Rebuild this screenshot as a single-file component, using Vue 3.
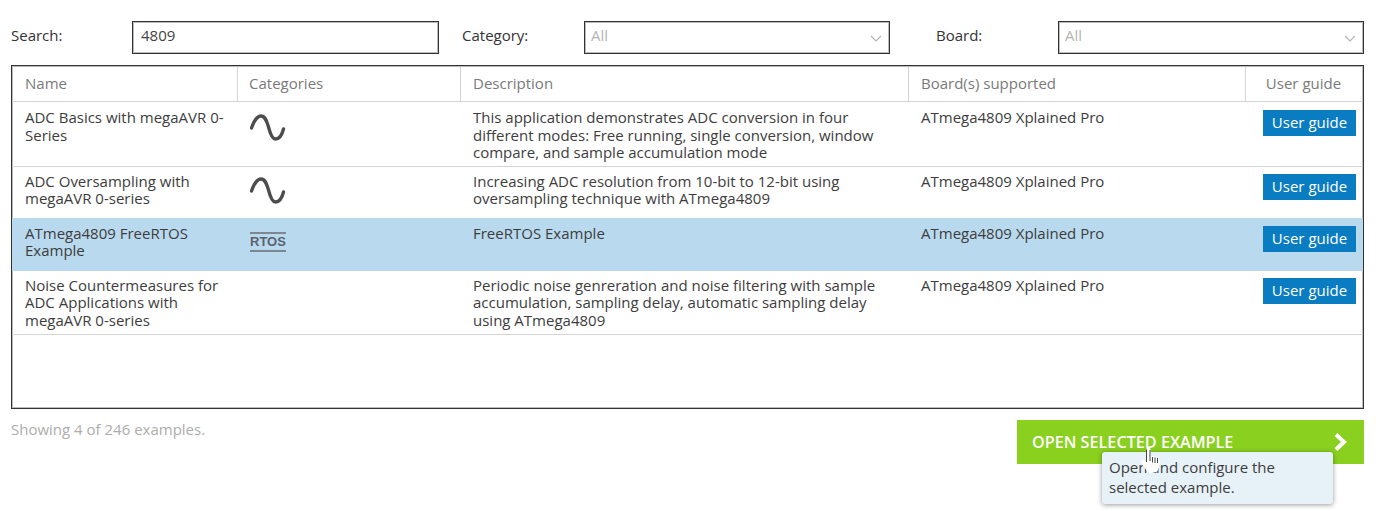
<script setup>
const rows = [
  { name: 'ADC Basics with megaAVR 0-Series', icon: 'wave', desc: 'This application demonstrates ADC conversion in four different modes: Free running, single conversion, window compare, and sample accumulation mode', h: 65 },
  { name: 'ADC Oversampling with megaAVR 0-series', icon: 'wave', desc: 'Increasing ADC resolution from 10-bit to 12-bit using oversampling technique with ATmega4809', h: 51 },
  { name: 'ATmega4809 FreeRTOS Example', icon: 'rtos', desc: 'FreeRTOS Example', h: 53, selected: true },
  { name: 'Noise Countermeasures for ADC Applications with megaAVR 0-series', icon: '', desc: 'Periodic noise genreration and noise filtering with sample accumulation, sampling delay, automatic sampling delay using ATmega4809', h: 64 },
]
</script>

<template>
  <div class="page">
    <div class="filters">
      <label class="lab">Search:</label>
      <div class="field">4809</div>
      <label class="lab">Category:</label>
      <div class="field sel">All
        <svg class="chev" width="12" height="7" viewBox="0 0 12 7"><path d="M1 1l5 5 5-5" fill="none" stroke="#b4b4b4" stroke-width="1.1"/></svg>
      </div>
      <label class="lab">Board:</label>
      <div class="field sel">All
        <svg class="chev" width="12" height="7" viewBox="0 0 12 7"><path d="M1 1l5 5 5-5" fill="none" stroke="#b4b4b4" stroke-width="1.1"/></svg>
      </div>
    </div>

    <div class="table">
      <div class="row head">
        <div class="c">Name</div>
        <div class="c">Categories</div>
        <div class="c">Description</div>
        <div class="c">Board(s) supported</div>
        <div class="c center">User guide</div>
      </div>
      <div v-for="r in rows" :key="r.name" class="row body" :class="{ selected: r.selected }" :style="{ height: r.h + 'px' }">
        <div class="c">{{ r.name }}</div>
        <div class="c icon">
          <svg v-if="r.icon === 'wave'" width="38" height="32" viewBox="0 0 38 32"><path d="M1.500 18C4 11 7.500 6 11 6C15.500 6 17 12 18.500 17C20 23 22 29 25.500 29C29 29 32 25 33.500 19" fill="none" stroke="#4d4d4d" stroke-width="3.400" stroke-linecap="round"/></svg>
          <div v-else-if="r.icon === 'rtos'" class="rtos">RTOS</div>
        </div>
        <div class="c">{{ r.desc }}</div>
        <div class="c">ATmega4809 Xplained Pro</div>
        <div class="c guide"><button class="ug">User guide</button></div>
      </div>
    </div>

    <div class="foot">
      <div class="count">Showing 4 of 246 examples.</div>
      <div class="open">
        <span class="open-label">OPEN SELECTED EXAMPLE</span>
        <svg width="16" height="20" viewBox="0 0 16 20"><path d="M3 2.500l8 7.500-8 7.500" fill="none" stroke="#fff" stroke-width="4"/></svg>
        <div class="tip">Open and configure the selected example.</div>
        <svg class="hand" width="22" height="28" viewBox="0 0 22 28">
          <path d="M6 2c1-1.200 2.800-.6 3 1v7l1.500-.3 1.500.2 1.500.3 1.500.5 2 .8c.8 1 1.200 3 1 5-.3 3-1 5-2.200 7.500-2 1.300-6 1.500-8.300.5C5 22 2.500 19 1 15.500c-.5-1.200.5-2.500 1.500-2L6 16z" fill="#fff" stroke="#fff" stroke-width="1.400" stroke-linejoin="round"/>
          <path d="M5.500 15V2.500M9 3v11" stroke="#444" stroke-width="1" fill="none"/>
          <path d="M11.500 10v5.500M14 10.500v5.500M16.500 11v5" stroke="#444" stroke-width="1" fill="none"/>
        </svg>
      </div>
    </div>
  </div>
</template>

<style>
html, body { margin: 0; background: #fff; }
</style>

<style scoped>
.page {
  width: 1383px;
  height: 511px;
  box-sizing: border-box;
  padding: 21px 19px 0 11px;
  font-family: "Open Sans", sans-serif;
  font-size: 15px;
  line-height: 17.5px;
  color: #3d3d3d;
  overflow: hidden;
}
.filters {
  display: grid;
  grid-template-columns: 121px 307px 145px 306px 168px 306px;
  height: 33px;
  align-items: center;
}
.lab { color: #333; padding-bottom: 3px; }
.lab:nth-child(3) { padding-left: 23px; }
.lab:nth-child(5) { padding-left: 46px; }
.field {
  position: relative;
  box-sizing: border-box;
  height: 33px;
  border: 1px solid #333;
  box-shadow: inset 0 0 0 1px rgba(60, 60, 60, .35);
  padding: 5px 8px;
  color: #444;
}
.sel { color: #b5b5b5; padding-left: 6px; }
.chev { position: absolute; right: 7px; top: 13px; }
.table {
  box-sizing: border-box;
  margin-top: 11px;
  height: 344px;
  border: 1px solid #333;
  box-shadow: inset 0 0 0 1px rgba(60, 60, 60, .35);
}
.row {
  display: grid;
  grid-template-columns: 226px 223px 448px 337px 1fr;
}
.head {
  box-sizing: border-box;
  height: 35px;
  margin-top: 1px;
  border-bottom: 1px solid #d4d4d4;
  color: #7a7a7a;
}
.head .c { padding: 8px 12px 0 12px; border-right: 1px solid #d4d4d4; }
.head .c:first-child { padding-left: 13px; }
.head .c:nth-child(2) { padding-left: 11px; }
.head .c:last-child { border-right: none; padding-right: 14px; }
.center { text-align: center; }
.body {
  box-sizing: border-box;
  border-bottom: 1px solid #d4d4d4;
}
.body:has(+ .selected) { border-bottom: none; }
.body .c { padding: 7px 12px 0 12px; }
.body .c:first-child { padding-left: 13px; }
.body ~ .body .c { padding-top: 5.500px; }
.body.selected .c { padding-top: 6.500px; }
.selected { background: #b9d9ee; border-bottom: none; }
.body .icon { padding: 8px 0 0 12px; }
.body ~ .body .icon, .body.selected .icon { padding-top: 6px; }
.rtos {
  display: inline-block;
  margin-top: 8px;
  font-family: "Liberation Sans", sans-serif;
  font-weight: 700;
  font-size: 13px;
  line-height: 14px;
  padding: 1px 0;
  color: #5c6470;
  border-top: 2px solid #7d8791;
  border-bottom: 2px solid #7d8791;
}
.body .guide, .body ~ .body .guide { padding: 8px 7px 0 17px; }
.body ~ .body .guide { padding-top: 7px; }
.body.selected .guide { padding-top: 8px; }
.ug {
  width: 93px;
  height: 26px;
  border: none;
  padding: 0;
  background: #0a7cc1;
  color: #fff;
  font: inherit;
}
.foot {
  display: flex;
  justify-content: space-between;
  margin-top: 11px;
}
.count { color: #adadad; line-height: 19px; }
.open {
  position: relative;
  box-sizing: border-box;
  width: 347px;
  height: 44px;
  background: #8ad01f;
  color: #fff;
  font-weight: 600;
  font-size: 16.200px;
  display: flex;
  align-items: center;
  justify-content: space-between;
  padding: 0 15px;
}
.open-label { padding-top: 2px; }
.tip {
  position: absolute;
  left: 85px;
  top: 32px;
  width: 231px;
  height: 52px;
  box-sizing: border-box;
  padding: 5px 7px;
  background: #e7f1f8;
  border-radius: 3px;
  box-shadow: 0 1px 5px rgba(0, 0, 0, .4);
  color: #3d3d3d;
  font-weight: 400;
  font-size: 15px;
  line-height: 20px;
}
.hand { position: absolute; left: 124px; top: 27px; }
</style>
